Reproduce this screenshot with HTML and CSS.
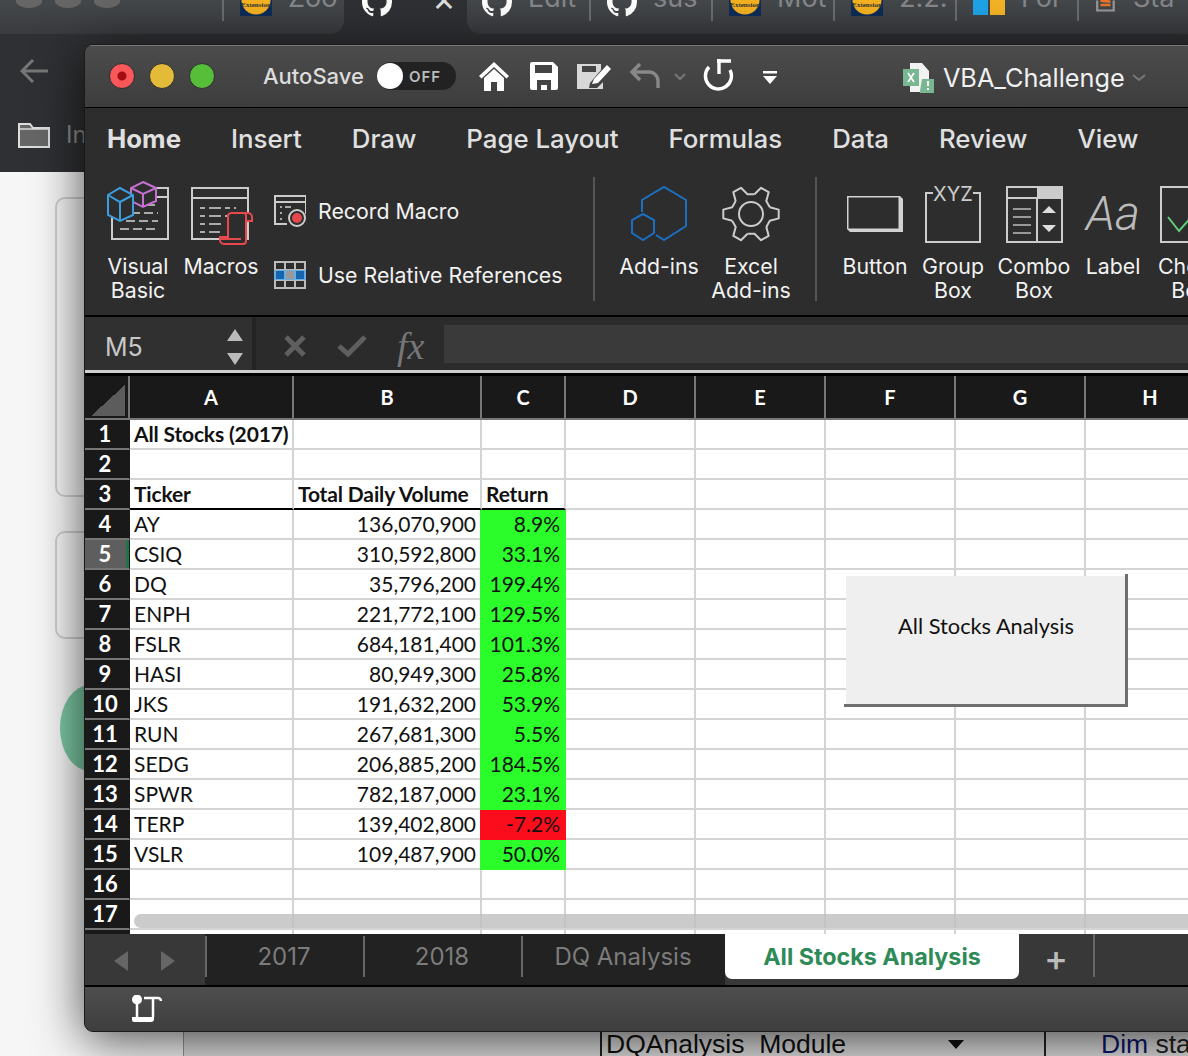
FILE: index.html

```html
<!DOCTYPE html>
<html lang="en">
<head>
  <meta charset="UTF-8">
  <title>VBA_Challenge</title>
  <link rel="stylesheet" href="styles.css">
</head>
<body>
  <!-- browser and page behind the Excel window -->
  <div class="browser-tabs">
    <div class="tab-lead"><span class="dot"></span><span class="dot"></span><span class="dot"></span></div>
    <div class="tab tab-before"><span class="ext-icon">Extension</span><span class="tab-text">Zoo</span></div>
    <div class="tab tab-open"><svg class="gh" viewBox="0 0 16 16"><use href="#gh-mark"/></svg><span class="tab-text tab-x">×</span></div>
    <div class="tab tab-after"><svg class="gh" viewBox="0 0 16 16"><use href="#gh-mark"/></svg><span class="tab-text">Edit</span></div>
    <div class="tab"><svg class="gh" viewBox="0 0 16 16"><use href="#gh-mark"/></svg><span class="tab-text">sus</span></div>
    <div class="tab"><span class="ext-icon">Extension</span><span class="tab-text">Mot</span></div>
    <div class="tab"><span class="ext-icon">Extension</span><span class="tab-text">2.2.</span></div>
    <div class="tab"><span class="ms-icon"><i></i><i></i></span><span class="tab-text">For</span></div>
    <div class="tab"><svg class="so" viewBox="0 0 20 20"><path d="M2 6v9h15V6" fill="none" stroke="#999" stroke-width="2"/><path d="M5 10h9M5 6l9 1M6 2l9 2" stroke="#e8762c" stroke-width="2.4"/></svg><span class="tab-text">Sta</span></div>
  </div>
  <div class="browser-bar">
    <svg class="back" viewBox="0 0 28 26"><path d="M13 2 2 13l11 11M2 13h26" fill="none" stroke="#777" stroke-width="3"/></svg>
    <div class="bar-folder">
      <svg width="32" height="26" viewBox="0 0 32 26"><path d="M1 25V2h11l3 4h16v19z" fill="#666" stroke="#ddd" stroke-width="2"/><path d="M1 7h30" stroke="#ddd" stroke-width="1.5"/></svg>
      <span>In</span>
    </div>
  </div>
  <div class="page">
    <div class="card card-one"></div>
    <div class="card card-two"></div>
    <div class="float-btn"></div>
    <div class="editor">
      <div class="module"><span>DQAnalysis_Module</span><span class="module-arrow"></span></div>
      <span class="code"><b>Dim</b> sta</span>
    </div>
  </div>

  <svg class="defs" width="0" height="0">
    <defs>
      <path id="gh-mark" fill="#fff" d="M8 0C3.58 0 0 3.58 0 8c0 3.54 2.29 6.53 5.47 7.59.4.07.55-.17.55-.38 0-.19-.01-.82-.01-1.49-2.01.37-2.53-.49-2.69-.94-.09-.23-.48-.94-.82-1.13-.28-.15-.68-.52-.01-.53.63-.01 1.08.58 1.23.82.72 1.21 1.87.87 2.33.66.07-.52.28-.87.51-1.07-1.78-.2-3.64-.89-3.64-3.95 0-.87.31-1.59.82-2.15-.08-.2-.36-1.02.08-2.12 0 0 .67-.21 2.2.82.64-.18 1.32-.27 2-.27s1.36.09 2 .27c1.53-1.04 2.2-.82 2.2-.82.44 1.1.16 1.92.08 2.12.51.56.82 1.27.82 2.15 0 3.07-1.87 3.75-3.65 3.95.29.25.54.73.54 1.48 0 1.07-.01 1.93-.01 2.2 0 .21.15.46.55.38A8.01 8.01 0 0 0 16 8c0-4.42-3.58-8-8-8z"/>
    </defs>
  </svg>

  <div class="excel">
    <header class="titlebar">
      <span class="light light-red"></span>
      <span class="light light-yellow"></span>
      <span class="light light-green"></span>
      <span class="autosave">AutoSave</span>
      <span class="toggle"><i></i>OFF</span>
      <svg class="qa qa-home" width="32" height="30" viewBox="0 0 32 30"><path d="M1 15 16 1l15 14-2.5 2.5L16 6 3.5 17.5z" fill="#fff"/><path d="M6 17 16 8l10 9v13h-7v-9h-6v9H6z" fill="#fff"/></svg>
      <svg class="qa qa-save" width="28" height="28" viewBox="0 0 28 28"><path d="M0 2a2 2 0 0 1 2-2h21l5 5v21a2 2 0 0 1-2 2H2a2 2 0 0 1-2-2z" fill="#fff"/><path d="M5 3h17v8H5z" fill="#444"/><path d="M7 18h14v10h-4v-5h-6v5H7z" fill="#444"/></svg>
      <svg class="qa qa-edit" width="36" height="30" viewBox="0 0 36 30"><path d="M1 3h24v6L14 22l-1 5h8l6-6v7H1z" fill="#d8d8d8"/><path d="M6 5h14v6H6z" fill="#444"/><path d="M18 18 31 4l4 4-13 14-6 1z" fill="#fff"/></svg>
      <svg class="qa qa-undo" width="32" height="28" viewBox="0 0 32 28"><path d="M11 2 3 10l8 8M3 10h17a9 9 0 0 1 9 9v7" fill="none" stroke="#888" stroke-width="3.4"/></svg>
      <svg class="qa qa-chev" width="14" height="10" viewBox="0 0 14 10"><path d="m2 2 5 5 5-5" fill="none" stroke="#777" stroke-width="2"/></svg>
      <svg class="qa qa-redo" width="32" height="32" viewBox="0 0 32 32"><path d="M7 8A13 13 0 1 0 28 11" fill="none" stroke="#fff" stroke-width="3.4"/><path d="M17 0v15M15 2h14" fill="none" stroke="#fff" stroke-width="3.4"/></svg>
      <svg class="qa qa-more" width="16" height="16" viewBox="0 0 16 16"><path d="M1 1h14v2.5H1zM1 6h14l-7 8z" fill="#fff"/></svg>
      <div class="doc-title">
        <svg width="34" height="32" viewBox="0 0 34 32"><path d="M7 1h12l7 8v21H7z" fill="#f2f2f2"/><path d="M0 7h16v17H0z" fill="#79b793"/><path d="M5 11l6 9M11 11l-6 9" stroke="#fff" stroke-width="1.6"/><path d="M19 17h12v14H17v-2" fill="#79b793"/><path d="M25 19v5M25 26v2" stroke="#fff" stroke-width="2"/></svg>
        <span>VBA_Challenge</span>
        <svg width="16" height="10" viewBox="0 0 16 10"><path d="m2 2 6 5 6-5" fill="none" stroke="#777" stroke-width="2"/></svg>
      </div>
    </header>

    <nav class="ribbon-tabs">
      <span class="rt rt-on">Home</span>
      <span class="rt">Insert</span>
      <span class="rt">Draw</span>
      <span class="rt">Page Layout</span>
      <span class="rt">Formulas</span>
      <span class="rt">Data</span>
      <span class="rt">Review</span>
      <span class="rt">View</span>
      <span class="rt rt-active">Developer</span>
    </nav>

    <section class="ribbon">
      <div class="rb-group rb-code">
        <div class="rb-btn">
          <svg width="64" height="64" viewBox="0 2 64 64">
            <path d="M50 8h12v51H6V34M50 17h12" fill="none" stroke="#ccc" stroke-width="2"/>
            <path d="M40 25h12M25 33h27M20 41h32M14 49h38" fill="none" stroke="#aaa" stroke-width="2" stroke-dasharray="9 4"/>
            <path d="M37 2l13 6v13l-13 6-12-6V8zM25 8l12 6 13-6M37 14v13" fill="#2d2d2d" stroke="#c56fd0" stroke-width="2"/>
            <path d="M14 8l13 7v20l-13 6-12-6V15zM2 15l12 7 13-7M14 22v19" fill="#2d2d2d" stroke="#3b9ede" stroke-width="2"/>
          </svg>
          <span>Visual<br>Basic</span>
        </div>
        <div class="rb-btn">
          <svg width="66" height="64" viewBox="0 0 66 64">
            <path d="M4 6h56v51H4zM4 16h56" fill="none" stroke="#ccc" stroke-width="2"/>
            <path d="M12 26h36M12 34h36M12 42h22M12 50h20" fill="none" stroke="#aaa" stroke-width="2" stroke-dasharray="5 4 12 4"/>
            <path d="M40 33a4 4 0 0 1 4-2h16a4 4 0 0 1 4 4v4h-6v20a3 3 0 0 1-3 3H36a4 4 0 0 1-4-4v-3h8z" fill="#2d2d2d" stroke="#e5484d" stroke-width="2"/>
            <path d="M58 39V35a3 3 0 0 0-3-4M32 57h21" fill="none" stroke="#e5484d" stroke-width="2"/>
          </svg>
          <span>Macros</span>
        </div>
        <div class="rb-list">
          <div class="rb-line">
            <svg width="32" height="32" viewBox="0 0 32 32">
              <path d="M13 29H1V1h31v18M1 7h31" fill="none" stroke="#ccc" stroke-width="2"/>
              <path d="M6 12h2M11 12h6M6 18h2M6 24h2" stroke="#aaa" stroke-width="2"/>
              <circle cx="23" cy="23" r="8" fill="#2d2d2d" stroke="#ccc" stroke-width="2"/>
              <circle cx="23" cy="23" r="5" fill="#e5484d"/>
            </svg>
            <span>Record Macro</span>
          </div>
          <div class="rb-line">
            <svg width="32" height="28" viewBox="0 0 32 28">
              <path d="M1 1h30v26H1zM11 1v26M21 1v26M1 9h30M1 19h30" fill="none" stroke="#bbb" stroke-width="2"/>
              <path d="M0 9h32v10H0z" fill="#6aaee0"/>
              <path d="M2 10h8v8H2zM22 10h8v8h-8z" fill="#1565b0"/>
              <path d="M12 10h8v8h-8z" fill="#999"/>
            </svg>
            <span>Use Relative References</span>
          </div>
        </div>
      </div>
      <div class="rb-group rb-addins">
        <div class="rb-btn">
          <svg width="60" height="60" viewBox="0 -1 60 60">
            <path d="M13 27V15L35 2l22 13v26L35 55l-8-5" fill="none" stroke="#1a6fc0" stroke-width="2"/>
            <path d="M14 29l11 6v13l-11 7-11-7V35z" fill="none" stroke="#1a6fc0" stroke-width="2"/>
          </svg>
          <span>Add-ins</span>
        </div>
        <div class="rb-btn">
          <svg width="60" height="60" viewBox="-30 -30 60 60">
            <g fill="none" stroke="#ccc" stroke-width="2" stroke-linejoin="round">
              <path d="M18.800-6.800 27.700-4.400V4.400L18.800 6.800 15.300 12.900"/>
              <path transform="rotate(60)" d="M18.800-6.800 27.700-4.400V4.400L18.800 6.800 15.300 12.900"/>
              <path transform="rotate(120)" d="M18.800-6.800 27.700-4.400V4.400L18.800 6.800 15.300 12.900"/>
              <path transform="rotate(180)" d="M18.800-6.800 27.700-4.400V4.400L18.800 6.800 15.300 12.900"/>
              <path transform="rotate(240)" d="M18.800-6.800 27.700-4.400V4.400L18.800 6.800 15.300 12.900"/>
              <path transform="rotate(300)" d="M18.800-6.800 27.700-4.400V4.400L18.800 6.800 15.300 12.900"/>
              <circle r="12"/>
            </g>
          </svg>
          <span>Excel<br>Add-ins</span>
        </div>
      </div>
      <div class="rb-group rb-forms">
        <div class="rb-btn">
          <svg width="60" height="60" viewBox="0 -2 60 60">
            <path d="M2 10h53l3 3v33H5l-3-3z" fill="#d2d2d2"/>
            <path d="M3.500 11.500h50v31h-50z" fill="#2d2d2d"/>
          </svg>
          <span>Button</span>
        </div>
        <div class="rb-btn">
          <svg width="60" height="60" viewBox="0 0 60 60">
            <path d="M10 9H3v49h54V9h-7" fill="none" stroke="#ccc" stroke-width="2"/>
            <text class="xyz" x="30" y="17" text-anchor="middle">XYZ</text>
          </svg>
          <span>Group<br>Box</span>
        </div>
        <div class="rb-btn">
          <svg width="60" height="60" viewBox="0 -1 60 60">
            <path d="M3 2h55v55H3zM3 13h55M33 13v44" fill="none" stroke="#ccc" stroke-width="2"/>
            <path d="M33 2h25v11H33z" fill="#ccc"/>
            <path d="M9 24h18M9 32h18M9 40h18M9 48h18" stroke="#999" stroke-width="2"/>
            <path d="M38 28l7-7 7 7zM38 40h14l-7 7z" fill="#ddd"/>
          </svg>
          <span>Combo<br>Box</span>
        </div>
        <div class="rb-btn">
          <span class="aa">Aa</span>
          <span>Label</span>
        </div>
        <div class="rb-btn rb-check">
          <svg width="60" height="60" viewBox="0 -1 60 60">
            <path d="M3 2h55v55H3z" fill="none" stroke="#ccc" stroke-width="2"/>
            <path d="M10 32l11 14 23-26" fill="none" stroke="#5fd07a" stroke-width="2"/>
          </svg>
          <span>Check<br>Box</span>
        </div>
      </div>
    </section>

    <section class="formula-bar">
      <div class="name-box">
        <span>M5</span>
        <div class="stepper"><i class="up-arrow"></i><i class="down-arrow"></i></div>
      </div>
      <div class="fx-btns">
        <svg width="24" height="24" viewBox="0 0 24 24"><path d="M3 3l18 18M21 3 3 21" stroke="#5f5f5f" stroke-width="5"/></svg>
        <svg width="30" height="24" viewBox="0 0 30 24"><path d="M2 12l9 8L28 3" fill="none" stroke="#5f5f5f" stroke-width="5"/></svg>
        <span class="fx">fx</span>
      </div>
      <div class="formula-input"></div>
    </section>

    <section class="sheet">
      <table class="grid">
        <colgroup>
          <col class="c-head"><col class="c-a"><col class="c-b"><col class="c-c">
          <col class="c-n"><col class="c-n"><col class="c-n"><col class="c-n"><col class="c-n">
        </colgroup>
        <thead>
          <tr><th class="corner"><span></span></th><th>A</th><th>B</th><th>C</th><th>D</th><th>E</th><th>F</th><th>G</th><th>H</th></tr>
        </thead>
        <tbody>
          <tr><th>1</th><td class="bold">All Stocks (2017)</td><td></td><td></td><td></td><td></td><td></td><td></td><td></td></tr>
          <tr><th>2</th><td></td><td></td><td></td><td></td><td></td><td></td><td></td><td></td></tr>
          <tr class="head-row"><th>3</th><td class="bold">Ticker</td><td class="bold">Total Daily Volume</td><td class="bold">Return</td><td></td><td></td><td></td><td></td><td></td></tr>
          <tr><th>4</th><td>AY</td><td class="num">136,070,900</td><td class="num up">8.9%</td><td></td><td></td><td></td><td></td><td></td></tr>
          <tr><th class="sel">5</th><td>CSIQ</td><td class="num">310,592,800</td><td class="num up">33.1%</td><td></td><td></td><td></td><td></td><td></td></tr>
          <tr><th>6</th><td>DQ</td><td class="num">35,796,200</td><td class="num up">199.4%</td><td></td><td></td><td></td><td></td><td></td></tr>
          <tr><th>7</th><td>ENPH</td><td class="num">221,772,100</td><td class="num up">129.5%</td><td></td><td></td><td></td><td></td><td></td></tr>
          <tr><th>8</th><td>FSLR</td><td class="num">684,181,400</td><td class="num up">101.3%</td><td></td><td></td><td></td><td></td><td></td></tr>
          <tr><th>9</th><td>HASI</td><td class="num">80,949,300</td><td class="num up">25.8%</td><td></td><td></td><td></td><td></td><td></td></tr>
          <tr><th>10</th><td>JKS</td><td class="num">191,632,200</td><td class="num up">53.9%</td><td></td><td></td><td></td><td></td><td></td></tr>
          <tr><th>11</th><td>RUN</td><td class="num">267,681,300</td><td class="num up">5.5%</td><td></td><td></td><td></td><td></td><td></td></tr>
          <tr><th>12</th><td>SEDG</td><td class="num">206,885,200</td><td class="num up">184.5%</td><td></td><td></td><td></td><td></td><td></td></tr>
          <tr><th>13</th><td>SPWR</td><td class="num">782,187,000</td><td class="num up">23.1%</td><td></td><td></td><td></td><td></td><td></td></tr>
          <tr><th>14</th><td>TERP</td><td class="num">139,402,800</td><td class="num down">-7.2%</td><td></td><td></td><td></td><td></td><td></td></tr>
          <tr><th>15</th><td>VSLR</td><td class="num">109,487,900</td><td class="num up">50.0%</td><td></td><td></td><td></td><td></td><td></td></tr>
          <tr><th>16</th><td></td><td></td><td></td><td></td><td></td><td></td><td></td><td></td></tr>
          <tr><th>17</th><td></td><td></td><td></td><td></td><td></td><td></td><td></td><td></td></tr>
          <tr class="cut-row"><th></th><td></td><td></td><td></td><td></td><td></td><td></td><td></td><td></td></tr>
        </tbody>
      </table>
      <button class="macro-btn">All Stocks Analysis</button>
      <div class="hscroll"></div>
    </section>

    <section class="sheet-tabs">
      <div class="tab-nav"><i class="nav-left"></i><i class="nav-right"></i></div>
      <div class="stab">2017</div>
      <div class="stab">2018</div>
      <div class="stab stab-dq">DQ Analysis</div>
      <div class="stab-on">All Stocks Analysis</div>
      <div class="stab-add">+</div>
    </section>

    <footer class="statusbar">
      <svg width="32" height="28" viewBox="0 0 32 28"><circle cx="6" cy="4.500" r="5" fill="#fff"/><path d="M6 9v14" stroke="#fff" stroke-width="2.500"/><path d="M1 22h22v2a3 3 0 0 1-3 3H3a2 2 0 0 1-2-2z" fill="#fff"/><path d="M13 3h14a3 3 0 0 1 3 3M22 3v19" fill="none" stroke="#fff" stroke-width="2.500"/></svg>
    </footer>
  </div>
</body>
</html>
```

FILE: styles.css

```css
* {
  box-sizing: border-box;
}
body {
  margin: 0;
  width: 1188px;
  height: 1056px;
  overflow: hidden;
  position: relative;
  display: flex;
  flex-direction: column;
  background-color: #f4f4f4;
  font-family: Inter, Roboto, sans-serif;
}
.defs {
  position: absolute;
}

/* browser behind */
.browser-tabs {
  height: 34px;
  flex: none;
  display: flex;
  overflow: hidden;
  background-color: #2f3033;
}
.tab-lead {
  width: 222px;
  flex: none;
  display: flex;
  gap: 13px;
  padding-left: 16px;
  background: linear-gradient(#45484b, #393b3e);
}
.dot {
  width: 26px;
  height: 14px;
  margin-top: -6px;
  border-radius: 50%;
  background-color: #666;
}
.tab {
  width: 122px;
  height: 34px;
  flex: none;
  display: flex;
  align-items: flex-end;
  gap: 16px;
  padding: 0 0 18px 16px;
  border-left: 2px solid #6a6c6f;
  border-image: linear-gradient(#6a6c6f 62%, transparent 62%) 1;
  background: linear-gradient(#45484b, #393b3e);
  color: #85878a;
  font-size: 27px;
  line-height: 24px;
  white-space: nowrap;
  overflow: hidden;
}
.tab-text {
  margin-bottom: 6px;
}
.tab-before {
  border-radius: 0 0 14px 0;
}
.tab-open {
  width: 123px;
  border: none;
  background: none;
  padding-left: 18px;
}
.tab-after {
  border: none;
  border-radius: 0 0 0 14px;
  padding-left: 15px;
}
.tab-x {
  color: #ddd;
  font-size: 36px;
  margin-left: 24px;
}
.gh {
  width: 30px;
  height: 30px;
  flex: none;
  margin-bottom: -1px;
}
.ext-icon {
  width: 32px;
  height: 16px;
  flex: none;
  overflow: hidden;
  background: radial-gradient(circle at 50% 0, #f4b120 14px, #0d2c58 15px);
  color: #333;
  font-family: "Liberation Serif", serif;
  font-size: 7px;
  font-weight: 700;
  line-height: 10px;
  text-align: center;
}
.ms-icon {
  width: 32px;
  height: 15px;
  flex: none;
  display: flex;
  gap: 2px;
  margin-bottom: 1px;
}
.ms-icon i {
  flex: 1;
  background-color: #1ea3e8;
}
.ms-icon i:last-child {
  background-color: #f5b326;
}
.so {
  width: 22px;
  height: 22px;
  flex: none;
}
.browser-bar {
  height: 138px;
  flex: none;
  padding: 24px 0 0 20px;
  background-color: #2f3033;
}
.back {
  width: 28px;
  height: 26px;
  display: block;
}
.bar-folder {
  display: flex;
  align-items: center;
  gap: 16px;
  margin: 36px 0 0 -2px;
  color: #888;
  font-size: 24px;
}
.page {
  flex: 1;
  display: flex;
  flex-direction: column;
  padding-left: 55px;
  background-color: #f6f6f6;
}
.card {
  width: 80px;
  border: 2px solid #cfcfd4;
  border-radius: 10px;
}
.card-one {
  height: 300px;
  margin-top: 25px;
}
.card-two {
  height: 108px;
  margin-top: 34px;
}
.float-btn {
  width: 60px;
  height: 86px;
  margin-top: 46px;
  margin-left: 5px;
  border-radius: 50%;
  background-color: #7cc9a4;
}
.editor {
  margin-top: auto;
  margin-left: 128px;
  margin-right: -100px;
  height: 24px;
  flex: none;
  display: flex;
  align-items: flex-start;
  padding-left: 416px;
  border-left: 1px solid #999;
  background-color: #dedede;
  color: #111;
  font-family: "Liberation Sans", sans-serif;
  font-size: 26.5px;
  line-height: 24px;
}
.module {
  width: 446px;
  height: 24px;
  display: flex;
  justify-content: space-between;
  padding: 0 80px 0 4px;
  border-left: 2px solid #222;
  border-right: 2px solid #222;
}
.module-arrow {
  width: 0;
  height: 0;
  margin-top: 8px;
  border: 8px solid transparent;
  border-top: 9px solid #111;
}
.code {
  margin-left: 55px;
  color: #222;
}
.code b {
  font-weight: normal;
  color: #0c1a6b;
}

/* excel window */
.excel {
  position: absolute;
  left: 84px;
  top: 44px;
  width: 1150px;
  height: 988px;
  display: flex;
  flex-direction: column;
  overflow: hidden;
  border: 1px solid #1a1a1a;
  border-radius: 9px;
  background-color: #2d2d2d;
  box-shadow: 0 8px 50px rgba(0, 0, 0, .7);
}
.titlebar {
  height: 63px;
  flex: none;
  position: relative;
  display: flex;
  align-items: center;
  padding-left: 24px;
  border-bottom: 1px solid #000;
  background: linear-gradient(#4c4c4c, #3d3d3d);
  box-shadow: inset 0 1px 0 #777;
}
.light {
  width: 26px;
  height: 26px;
  margin-right: 14px;
  border-radius: 50%;
  border: 1px solid #2f2f2f;
}
.light-red {
  background: radial-gradient(#a30d12 4px, #f9575a 5px);
}
.light-yellow {
  background-color: #e3bb39;
}
.light-green {
  background-color: #56be39;
}
.autosave {
  margin-left: 34px;
  color: #dcdcdc;
  font-size: 22px;
  font-weight: 500;
  white-space: nowrap;
}
.toggle {
  width: 79px;
  height: 28px;
  margin-left: 13px;
  display: flex;
  align-items: center;
  gap: 6px;
  border-radius: 14px;
  background-color: #222;
  color: #bbb;
  font-size: 15px;
  font-weight: 600;
  letter-spacing: 1px;
}
.toggle i {
  width: 26px;
  height: 26px;
  border-radius: 50%;
  background-color: #fff;
}
.qa {
  flex: none;
}
.qa-home {
  margin-left: 22px;
}
.qa-save {
  margin-left: 20px;
}
.qa-edit {
  margin-left: 18px;
}
.qa-undo {
  margin-left: 17px;
}
.qa-chev {
  margin-left: 12px;
  margin-top: 2px;
}
.qa-redo {
  margin-left: 15px;
  margin-top: -2px;
}
.qa-more {
  margin-left: 28px;
  margin-top: 3px;
}
.doc-title {
  margin-left: 125px;
  margin-top: 3px;
  display: flex;
  align-items: center;
  gap: 6px;
  color: #f0f0f0;
  font-size: 25.3px;
  white-space: nowrap;
}
.ribbon-tabs {
  height: 62px;
  flex: none;
  display: flex;
  gap: 50px;
  padding: 15px 0 0 22px;
  color: #e0e0e0;
  font-size: 25.8px;
  font-weight: 500;
  white-space: nowrap;
}
.rt-on {
  font-weight: 700;
}
.rt-active {
  position: relative;
  height: 36px;
}
.rt-active::after {
  content: "";
  position: absolute;
  left: 0;
  right: 0;
  bottom: -8px;
  height: 5px;
  border-radius: 3px;
  background-color: #e0e0e0;
}
.ribbon {
  height: 147px;
  flex: none;
  display: flex;
  border-bottom: 2px solid #000;
  background-color: #2d2d2d;
  color: #f2f2f2;
  font-size: 21.3px;
  line-height: 24px;
}
.rb-group {
  height: 124px;
  margin-top: 7px;
  display: grid;
  align-items: start;
  border-right: 2px solid #555;
}
.rb-code {
  width: 510px;
  grid-template-columns: 64px 66px auto;
  column-gap: 18px;
  padding-left: 21px;
}
.rb-addins {
  width: 222px;
  grid-template-columns: 78px 78px;
  column-gap: 14px;
  padding-left: 25px;
}
.rb-forms {
  border-right: none;
  grid-template-columns: 68px 64px 74px 60px 60px;
  column-gap: 12px;
  padding-left: 24px;
}
.rb-btn {
  display: flex;
  flex-direction: column;
  align-items: center;
  text-align: center;
  white-space: nowrap;
}
.rb-btn svg {
  flex: none;
  height: 64px;
  margin: 5px 0 8px;
  overflow: visible;
}
.rb-list {
  display: flex;
  flex-direction: column;
  gap: 32px;
  padding-top: 18px;
  margin-left: 2px;
  white-space: nowrap;
}
.rb-line {
  display: flex;
  align-items: center;
  gap: 12px;
  height: 32px;
}
.aa {
  height: 64px;
  margin: 5px 0 8px;
  color: #bbb;
  font-family: Roboto, sans-serif;
  font-size: 48px;
  font-style: italic;
  font-weight: 300;
  line-height: 64px;
}
.rb-check {
  align-items: flex-start;
  margin-left: 3px;
}
.xyz {
  fill: #ccc;
  font-family: Inter, sans-serif;
  font-size: 20px;
}
.formula-bar {
  height: 53px;
  flex: none;
  display: flex;
  background-color: #2b2b2b;
}
.name-box {
  width: 171px;
  height: 53px;
  flex: none;
  display: flex;
  align-items: center;
  justify-content: space-between;
  padding: 6px 9px 0 20px;
  background-color: #303030;
  border-right: 4px solid #242424;
  color: #c8c8c8;
  font-size: 25px;
}
.stepper {
  display: flex;
  flex-direction: column;
  gap: 12px;
}
.up-arrow,
.down-arrow {
  width: 0;
  height: 0;
  border-left: 8px solid transparent;
  border-right: 8px solid transparent;
}
.up-arrow {
  border-bottom: 12px solid #bbb;
}
.down-arrow {
  border-top: 12px solid #bbb;
}
.fx-btns {
  width: 188px;
  flex: none;
  display: flex;
  align-items: center;
  gap: 30px;
  padding: 4px 0 0 27px;
}
.fx {
  color: #777;
  font-family: "Liberation Serif", serif;
  font-size: 38px;
  font-style: italic;
}
.formula-input {
  flex: 1;
  height: 38px;
  margin-top: 8px;
  background-color: #3a3a3a;
}

/* sheet */
.sheet {
  height: 564px;
  flex: none;
  position: relative;
  overflow: hidden;
  border-top: 3px solid #cfcfcf;
  background-color: #fff;
}
.grid {
  table-layout: fixed;
  width: 1131px;
  margin-top: 3px;
  border-collapse: separate;
  border-spacing: 0;
  color: #111;
  font-family: Lato, sans-serif;
  font-size: 21px;
}
.sheet::before {
  content: "";
  display: block;
  height: 3px;
  margin-bottom: -3px;
  background-color: #000;
}
.c-head {
  width: 45px;
}
.c-a {
  width: 164px;
}
.c-b {
  width: 188px;
}
.c-c {
  width: 84px;
}
.c-n {
  width: 130px;
}
.grid th {
  padding: 0;
  background-color: #191919;
  border-right: 2px solid #777;
  border-bottom: 2px solid #777;
  color: #fff;
  font-size: 22px;
  font-weight: 700;
  line-height: 26px;
  text-align: center;
}
.grid thead th {
  height: 44px;
  font-size: 20px;
  font-weight: 700;
}
.corner span {
  display: block;
  width: 34px;
  height: 31px;
  margin: 6px 0 0 6px;
  background: linear-gradient(to bottom right, transparent 50%, #5c5c5c 50%);
}
.grid tbody th {
  height: 30px;
  padding-right: 4px;
  border-right: 1px solid #191919;
  box-shadow: inset -1px 0 0 #191919;
}
.grid tbody th.sel {
  background-color: #5e5e5e;
  box-shadow: inset -3px 0 0 #217346;
}
.grid td {
  height: 30px;
  padding: 0 4px;
  border-right: 2px solid #d4d4d4;
  border-bottom: 2px solid #d4d4d4;
  white-space: nowrap;
  overflow: hidden;
  line-height: 26px;
}
.grid td.bold {
  font-weight: 700;
  letter-spacing: -.15px;
}
.grid td.num {
  text-align: right;
}
.head-row td:nth-child(-n+4) {
  border-bottom: 2px solid #000;
}
.grid td.up {
  background-color: #2bfd2b;
  border-color: #2bfd2b;
  box-shadow: -2px 0 0 #2bfd2b;
}
.grid td.down {
  background-color: #fc0d1b;
  border-color: #fc0d1b;
  box-shadow: -2px 0 0 #fc0d1b;
}
.macro-btn {
  position: absolute;
  left: 759px;
  top: 201px;
  width: 284px;
  height: 133px;
  padding: 0 0 30px;
  border: none;
  background:
    linear-gradient(#6f6f6f, #6f6f6f) right top / 3px 100% no-repeat,
    linear-gradient(#6f6f6f, #6f6f6f) left bottom / 100% 3px no-repeat,
    linear-gradient(#efefef, #efefef) left 2px top 2px / calc(100% - 5px) calc(100% - 5px) no-repeat;
  color: #111;
  font-family: Lato, sans-serif;
  font-size: 21.8px;
}
.hscroll {
  position: absolute;
  left: 49px;
  right: 0;
  top: 541px;
  height: 14px;
  border-radius: 7px 0 0 7px;
  background-color: rgba(190, 190, 190, .8);
}
.sheet-tabs {
  height: 53px;
  flex: none;
  display: flex;
  border-bottom: 2px solid #000;
  background-color: #383838;
  color: #7c7c7c;
  font-size: 24px;
}
.tab-nav {
  width: 120px;
  flex: none;
  display: flex;
  align-items: center;
  gap: 33px;
  padding: 3px 0 0 29px;
}
.nav-left,
.nav-right {
  width: 0;
  height: 0;
  border-top: 10px solid transparent;
  border-bottom: 10px solid transparent;
}
.nav-left {
  border-right: 14px solid #666;
}
.nav-right {
  border-left: 14px solid #666;
}
.stab {
  width: 158px;
  flex: none;
  background-color: #222;
  text-align: center;
  line-height: 46px;
  position: relative;
}
.stab::before {
  content: "";
  position: absolute;
  left: 0;
  top: 2px;
  height: 41px;
  width: 2px;
  background-color: #666;
}
.stab-dq {
  width: 204px;
}
.stab-on {
  width: 294px;
  height: 46px;
  flex: none;
  margin-top: -1px;
  border-radius: 0 0 7px 7px;
  background-color: #fff;
  color: #2e8b57;
  font-size: 23.3px;
  font-weight: 700;
  text-align: center;
  line-height: 48px;
}
.stab-add {
  width: 76px;
  height: 43px;
  flex: none;
  border-right: 2px solid #666;
  color: #bbb;
  font-size: 36px;
  font-weight: 500;
  text-align: center;
  line-height: 48px;
}
.statusbar {
  flex: 1;
  padding: 8px 0 0 46px;
  background: linear-gradient(#4e4e4e, #3e3e3e);
}
```
